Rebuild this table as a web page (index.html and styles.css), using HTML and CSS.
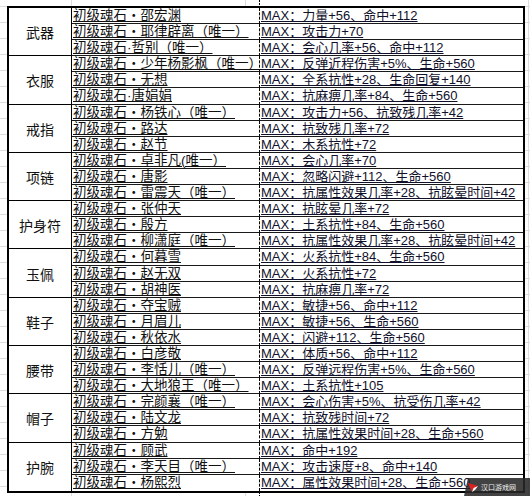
FILE: index.html
```html
<!DOCTYPE html>
<html lang="zh">
<head>
<meta charset="utf-8">
<title>初级魂石</title>
<link rel="stylesheet" href="styles.css">
</head>
<body>
<div class="sheet">
  <div class="cat">武器</div>
  <div class="name">初级魂石・邵宏渊</div><div class="val">MAX：力量+56、命中+112</div>
  <div class="name">初级魂石・耶律辟离（唯一）</div><div class="val">MAX：攻击力+70</div>
  <div class="name">初级魂石·哲别（唯一）</div><div class="val">MAX：会心几率+56、命中+112</div>

  <div class="cat">衣服</div>
  <div class="name">初级魂石・少年杨影枫（唯一）</div><div class="val">MAX：反弹近程伤害+5%、生命+560</div>
  <div class="name">初级魂石・无想</div><div class="val">MAX：全系抗性+28、生命回复+140</div>
  <div class="name">初级魂石·唐娟娟</div><div class="val">MAX：抗麻痹几率+84、生命+560</div>

  <div class="cat">戒指</div>
  <div class="name">初级魂石・杨铁心（唯一）</div><div class="val">MAX：攻击力+56、抗致残几率+42</div>
  <div class="name">初级魂石・路达</div><div class="val">MAX：抗致残几率+72</div>
  <div class="name">初级魂石・赵节</div><div class="val">MAX：木系抗性+72</div>

  <div class="cat">项链</div>
  <div class="name">初级魂石・卓非凡(唯一）</div><div class="val">MAX：会心几率+70</div>
  <div class="name">初级魂石・唐影</div><div class="val">MAX：忽略闪避+112、生命+560</div>
  <div class="name">初级魂石・雷震天（唯一）</div><div class="val">MAX：抗属性效果几率+28、抗眩晕时间+42</div>

  <div class="cat">护身符</div>
  <div class="name">初级魂石・张仲天</div><div class="val">MAX：抗眩晕几率+72</div>
  <div class="name">初级魂石・殷方</div><div class="val">MAX：土系抗性+84、生命+560</div>
  <div class="name">初级魂石・柳潇庭（唯一）</div><div class="val">MAX：抗属性效果几率+28、抗眩晕时间+42</div>

  <div class="cat">玉佩</div>
  <div class="name">初级魂石・何暮雪</div><div class="val">MAX：火系抗性+84、生命+560</div>
  <div class="name">初级魂石・赵无双</div><div class="val">MAX：火系抗性+72</div>
  <div class="name">初级魂石・胡神医</div><div class="val">MAX：抗麻痹几率+72</div>

  <div class="cat">鞋子</div>
  <div class="name">初级魂石・夺宝贼</div><div class="val">MAX：敏捷+56、命中+112</div>
  <div class="name">初级魂石・月眉儿</div><div class="val">MAX：敏捷+56、生命+560</div>
  <div class="name">初级魂石・秋依水</div><div class="val">MAX：闪避+112、生命+560</div>

  <div class="cat">腰带</div>
  <div class="name">初级魂石・白彦敬</div><div class="val">MAX：体质+56、命中+112</div>
  <div class="name">初级魂石・李恬儿（唯一）</div><div class="val">MAX：反弹远程伤害+5%、生命+560</div>
  <div class="name">初级魂石・大地狼王（唯一）</div><div class="val">MAX：土系抗性+105</div>

  <div class="cat">帽子</div>
  <div class="name">初级魂石・完颜襄（唯一）</div><div class="val">MAX：会心伤害+5%、抗受伤几率+42</div>
  <div class="name">初级魂石・陆文龙</div><div class="val">MAX：抗致残时间+72</div>
  <div class="name">初级魂石・方勉</div><div class="val">MAX：抗属性效果时间+28、生命+560</div>

  <div class="cat last">护腕</div>
  <div class="name">初级魂石・顾武</div><div class="val">MAX：命中+192</div>
  <div class="name">初级魂石・李天目（唯一）</div><div class="val">MAX：攻击速度+8、命中+140</div>
  <div class="name last">初级魂石・杨熙烈</div><div class="val last">MAX：属性效果时间+28、生命+560</div>
</div>
<div class="mark">
  <svg class="mark-icon" width="12" height="13" viewBox="0 0 12 13">
    <path d="M1 2 L5 11 L6.5 7 L11 5 Z" fill="#e02020"/>
    <path d="M5 11 L6.5 7 L11 5 L8 9 Z" fill="#fff"/>
  </svg>
  <span class="mark-text">汉口游戏网</span>
</div>
</body>
</html>
```

FILE: styles.css
```css
html, body {
  margin: 0;
  padding: 0;
}

body {
  width: 530px;
  height: 496px;
  overflow: hidden;
  position: relative;
  background-color: #fff;
  background-image:
    repeating-linear-gradient(to bottom, #000 0 2px, transparent 2px 3px),
    linear-gradient(#dcdcdc, #dcdcdc),
    linear-gradient(#dcdcdc, #dcdcdc),
    linear-gradient(#dcdcdc, #dcdcdc),
    repeating-linear-gradient(to bottom, transparent 0 6px, #dcdcdc 6px 7px, transparent 7px 16px);
  background-size: 1px 100%, 1px 100%, 1px 100%, 1px 100%, 100% 100%;
  background-position: 259px 0, 71px 0, 245px 0, 528px 0, 0 0;
  background-repeat: no-repeat;
  font-family: "Liberation Sans", "Noto Sans CJK SC", sans-serif;
  color: #111;
}

.sheet {
  margin: 6px 0 0 7px;
  width: 518px;
  box-sizing: border-box;
  border: 2px solid #000;
  background: #fff;
  display: grid;
  grid-template-columns: 63px 188px 263px;
  grid-auto-rows: 16.1px;
}

.cat {
  grid-column: 1;
  grid-row: span 3;
  border-right: 1px solid #000;
  border-bottom: 1px solid #000;
  display: flex;
  align-items: center;
  justify-content: center;
  font-size: 14px;
  font-family: "Noto Sans CJK SC", sans-serif;
  padding-top: 1px;
  box-sizing: border-box;
}

.name,
.val {
  box-sizing: border-box;
  border-bottom: 1px solid #1a1a1a;
  line-height: 15px;
  white-space: nowrap;
  text-decoration: underline;
  text-decoration-thickness: 1px;
  text-underline-offset: 1px;
}

.name {
  grid-column: 2;
  padding-left: 1px;
  font-size: 13.5px;
  border-right: 1px dashed #000;
}

.val {
  grid-column: 3;
  padding-left: 1px;
  font-size: 13px;
  color: #10102a;
}

.last {
  border-bottom: none;
}

.mark {
  position: absolute;
  left: 464px;
  top: 478px;
  width: 66px;
  height: 18px;
  background: rgba(40, 40, 40, 0.88);
  clip-path: polygon(4px 0, 100% 0, 100% 100%, 0 100%);
  display: flex;
  align-items: center;
  gap: 2px;
  padding-left: 3px;
  box-sizing: border-box;
}

.mark-icon {
  display: block;
  flex: none;
}

.mark-text {
  font-family: "Noto Sans CJK SC", sans-serif;
  font-size: 7px;
  line-height: 8px;
  color: #f2f2f2;
  white-space: nowrap;
}
```
